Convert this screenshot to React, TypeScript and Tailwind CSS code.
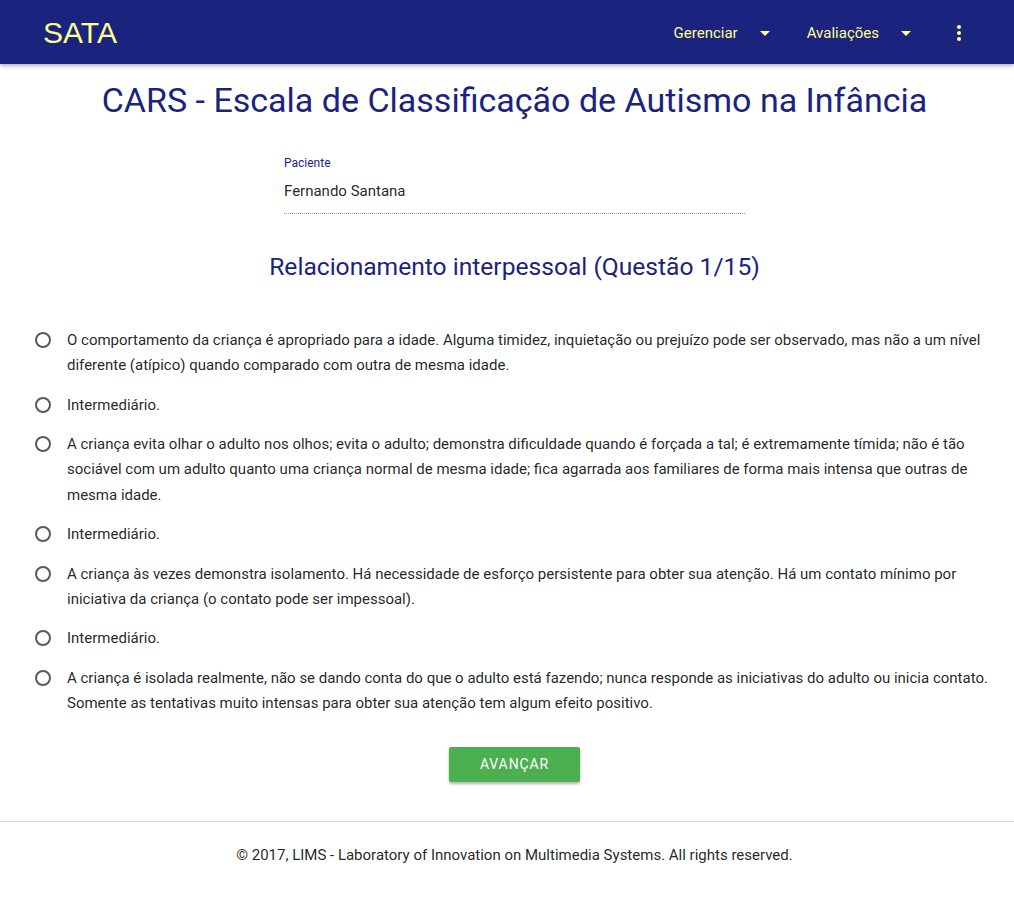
import React from "react";

const options = [
  "O comportamento da criança é apropriado para a idade. Alguma timidez, inquietação ou prejuízo pode ser observado, mas não a um nível diferente (atípico) quando comparado com outra de mesma idade.",
  "Intermediário.",
  "A criança evita olhar o adulto nos olhos; evita o adulto; demonstra dificuldade quando é forçada a tal; é extremamente tímida; não é tão sociável com um adulto quanto uma criança normal de mesma idade; fica agarrada aos familiares de forma mais intensa que outras de mesma idade.",
  "Intermediário.",
  "A criança às vezes demonstra isolamento. Há necessidade de esforço persistente para obter sua atenção. Há um contato mínimo por iniciativa da criança (o contato pode ser impessoal).",
  "Intermediário.",
  "A criança é isolada realmente, não se dando conta do que o adulto está fazendo; nunca responde as iniciativas do adulto ou inicia contato. Somente as tentativas muito intensas para obter sua atenção tem algum efeito positivo.",
];

function Caret() {
  return (
    <svg width="10" height="5" viewBox="0 0 10 5" className="ml-[22px]">
      <path d="M0 0 L10 0 L5 5 Z" fill="#ffff8d" />
    </svg>
  );
}

export default function App() {
  return (
    <div className="min-h-[900px] bg-white font-['Roboto',sans-serif] text-[rgba(0,0,0,0.87)]">
      <header className="h-16 bg-[#1a237e] flex items-center pt-[2px] px-[43px] shadow-[0_2px_4px_rgba(0,0,0,0.3)] relative z-10">
        <div className="font-['Liberation_Sans',Arial,sans-serif] text-[30px] text-[#ffff8d] leading-none">SATA</div>
        <div className="flex-1" />
        <div className="flex items-center text-[15px] text-[#ffff8d]">
          <span>Gerenciar</span>
          <Caret />
          <span className="ml-[37px]">Avaliações</span>
          <Caret />
          <svg width="6" height="18" viewBox="0 0 6 18" className="ml-[45px] mr-[9px]">
            <circle cx="3" cy="3" r="2" fill="#ffff8d" />
            <circle cx="3" cy="9" r="2" fill="#ffff8d" />
            <circle cx="3" cy="15" r="2" fill="#ffff8d" />
          </svg>
        </div>
      </header>

      <main className="pt-[14px]">
        <h1 className="pl-[15px] text-center text-[34px] text-[#1a237e] leading-[44px]">
          CARS - Escala de Classificação de Autismo na Infância
        </h1>

        <div className="pl-[15px] mt-[33px]">
          <div className="w-[461px] mx-auto">
            <label className="block text-[12px] text-[#1a237e] leading-[16px]">Paciente</label>
            <div className="text-[15px] leading-[20px] mt-[10px] pb-[12px] border-b border-dotted border-[#9e9e9e]">
              Fernando Santana
            </div>
          </div>
        </div>

        <h2 className="pl-[15px] text-center text-[24.6px] text-[#1a237e] leading-[30px] mt-[38px]">
          Relacionamento interpessoal (Questão 1/15)
        </h2>

        <div className="pl-[35px] pr-[22px] mt-[46px] flex flex-col gap-[14.3px]">
          {options.map((t, i) => (
            <label key={i} className="flex items-start text-[15px] leading-[25.2px] cursor-pointer">
              <span className="mt-[4px] w-4 h-4 rounded-full border-2 border-[#5a5a5a] shrink-0" />
              <span className="ml-[16px]">{t}</span>
            </label>
          ))}
        </div>

        <div className="pl-[15px] flex justify-center mt-[31px]">
          <button className="w-[131px] h-[35px] bg-[#4caf50] text-white text-[14px] tracking-[0.9px] rounded-[2px] shadow-[0_2px_3px_rgba(0,0,0,0.3)] font-normal">
            AVANÇAR
          </button>
        </div>
      </main>

      <footer className="mt-[39px] border-t border-[#d6d6d6] pt-[23px] pl-[15px] text-center text-[15px] leading-[20px]">
        © 2017, LIMS - Laboratory of Innovation on Multimedia Systems. All rights reserved.
      </footer>
    </div>
  );
}
